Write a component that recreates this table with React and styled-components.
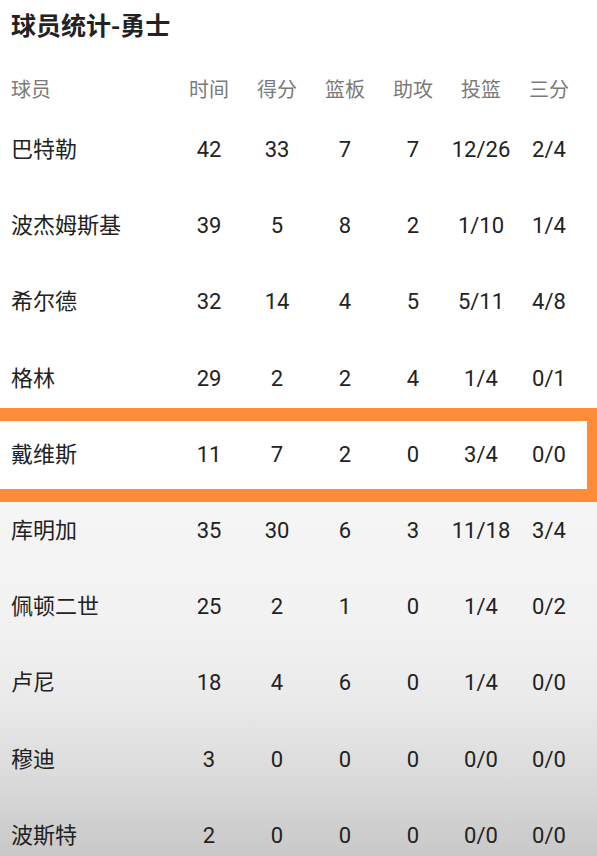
import React from 'react'
import styled, { createGlobalStyle } from 'styled-components'

const GlobalStyle = createGlobalStyle`
  html, body {
    margin: 0;
    padding: 0;
    background: #fff;
    overflow-x: hidden;
  }
  body {
    font-family: Roboto, "Noto Sans CJK SC", sans-serif;
  }
`

const Page = styled.div`
  width: 597px;
  min-height: 856px;
  overflow: hidden;
  background: linear-gradient(
    to bottom,
    #ffffff 0px,
    #ffffff 502px,
    #f5f5f5 502px,
    #f2f2f2 620px,
    #eaeaea 700px,
    #dadada 780px,
    #c8c8c8 856px
  );
`

const Title = styled.h1`
  margin: 0;
  height: 48px;
  padding-left: 11px;
  font-size: 25px;
  line-height: 48px;
  font-weight: 700;
  color: #222;
  font-family: "Noto Sans CJK SC", sans-serif;
`

const Row = styled.div`
  position: relative;
  display: grid;
  grid-template-columns: 1fr repeat(6, 68px);
  align-items: center;
  padding: 0 14px 0 11px;
  height: ${p => (p.$head ? '44px' : '76.2px')};
  margin-top: ${p => (p.$head ? '20px' : '0')};
  font-size: ${p => (p.$head ? '20px' : '22px')};
  line-height: ${p => (p.$head ? '24px' : '26px')};
  color: ${p => (p.$head ? '#7a7a7a' : '#222')};
  font-family: Roboto, "Noto Sans CJK SC", sans-serif;
`

const Name = styled.div`
  white-space: nowrap;
`

const Cell = styled.div`
  text-align: center;
  white-space: nowrap;
`

const Highlight = styled.div`
  position: absolute;
  top: -9px;
  bottom: -9px;
  left: -30px;
  right: -3px;
  border: 13px solid #ff8c38;
  pointer-events: none;
`

const headers = ['时间', '得分', '篮板', '助攻', '投篮', '三分']

const players = [
  ['巴特勒', '42', '33', '7', '7', '12/26', '2/4'],
  ['波杰姆斯基', '39', '5', '8', '2', '1/10', '1/4'],
  ['希尔德', '32', '14', '4', '5', '5/11', '4/8'],
  ['格林', '29', '2', '2', '4', '1/4', '0/1'],
  ['戴维斯', '11', '7', '2', '0', '3/4', '0/0', true],
  ['库明加', '35', '30', '6', '3', '11/18', '3/4'],
  ['佩顿二世', '25', '2', '1', '0', '1/4', '0/2'],
  ['卢尼', '18', '4', '6', '0', '1/4', '0/0'],
  ['穆迪', '3', '0', '0', '0', '0/0', '0/0'],
  ['波斯特', '2', '0', '0', '0', '0/0', '0/0'],
]

export default function App() {
  return (
    <Page>
      <GlobalStyle />
      <Title>球员统计-勇士</Title>
      <Row $head>
        <Name>球员</Name>
        {headers.map(h => (
          <Cell key={h}>{h}</Cell>
        ))}
      </Row>
      {players.map(([name, ...rest]) => {
        const marked = rest[6] === true
        const stats = rest.slice(0, 6)
        return (
          <Row key={name}>
            <Name>{name}</Name>
            {stats.map((s, i) => (
              <Cell key={i}>{s}</Cell>
            ))}
            {marked && <Highlight />}
          </Row>
        )
      })}
    </Page>
  )
}
